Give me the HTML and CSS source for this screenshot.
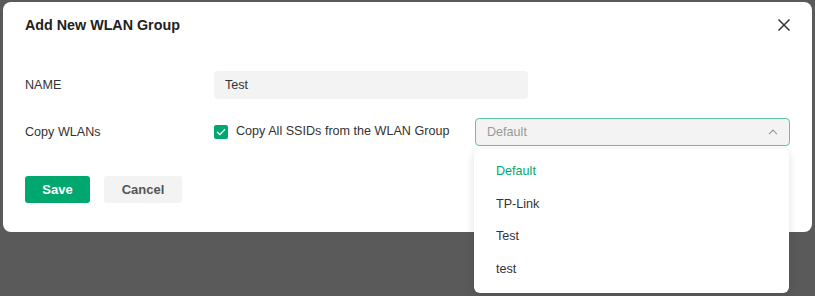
FILE: index.html
```html
<!DOCTYPE html>
<html lang="en">

<head>
    <meta charset="UTF-8">
    <meta name="viewport" content="width=device-width, initial-scale=1.0">
    <title>Add New WLAN Group</title>
    <link rel="stylesheet" href="styles.css">
</head>

<body>
    <div class="modal">
        <div class="modal-header">
            <h3>Add New WLAN Group</h3>
            <button class="close-btn" aria-label="Close">
                <svg width="14" height="14" viewBox="0 0 14 14">
                    <path d="M1.5 1.5 L12.5 12.5 M12.5 1.5 L1.5 12.5" stroke="#333" stroke-width="1.5" fill="none" />
                </svg>
            </button>
        </div>

        <div class="form-row row-name">
            <label class="form-label">NAME</label>
            <div class="input-box">Test</div>
        </div>

        <div class="form-row row-copy">
            <label class="form-label">Copy WLANs</label>
            <div class="copy-field">
                <span class="checkbox">
                    <svg width="10" height="8" viewBox="0 0 10 8">
                        <path d="M1 4 L3.8 6.6 L9 1.2" stroke="#fff" stroke-width="1.3" fill="none" />
                    </svg>
                </span>
                <span class="checkbox-text">Copy All SSIDs from the WLAN Group</span>
                <div class="select-wrap">
                    <div class="select-box">
                        <span>Default</span>
                        <svg width="10" height="6" viewBox="0 0 10 6">
                            <path d="M1 5.2 L5 1.2 L9 5.2" stroke="#999" stroke-width="1.2" fill="none" />
                        </svg>
                    </div>
                    <ul class="dropdown">
                        <li class="active">Default</li>
                        <li>TP-Link</li>
                        <li>Test</li>
                        <li>test</li>
                    </ul>
                </div>
            </div>
        </div>

        <div class="actions">
            <button class="btn btn-save">Save</button>
            <button class="btn btn-cancel">Cancel</button>
        </div>
    </div>
</body>

</html>
```

FILE: styles.css
```css
* {
    box-sizing: border-box;
    margin: 0;
    padding: 0;
}

body {
    font-family: "Liberation Sans", Arial, sans-serif;
    font-size: 12.6px;
    color: #333;
    background-color: #5a5a5a;
    height: 296px;
    overflow: hidden;
}

.modal {
    margin: 2px 0 0 3px;
    width: 809px;
    height: 230px;
    background-color: #fff;
    border-radius: 8px;
    padding: 12px 22px 0 22px;
}

.modal-header {
    display: flex;
    justify-content: space-between;
    align-items: center;
    height: 22px;
}

.modal-header h3 {
    font-size: 14.3px;
    font-weight: bold;
    color: #222;
}

.close-btn {
    border: none;
    background: none;
    display: flex;
    margin-right: -1px;
    cursor: pointer;
}

.form-row {
    display: flex;
    align-items: center;
    height: 28px;
}

.row-name {
    margin-top: 35px;
}

.row-copy {
    margin-top: 19px;
}

.form-label {
    width: 189px;
    color: #333;
}

.input-box {
    width: 314px;
    height: 28px;
    line-height: 28px;
    padding: 0 11px;
    background-color: #f3f3f3;
    border-radius: 4px;
    color: #333;
}

.copy-field {
    display: flex;
    align-items: center;
}

.checkbox {
    width: 14px;
    height: 14px;
    border-radius: 2px;
    background-color: #00a870;
    display: flex;
    align-items: center;
    justify-content: center;
    margin-top: -1px;
}

.checkbox-text {
    margin-left: 8px;
    margin-top: -3px;
    width: 239px;
}

.select-wrap {
    position: relative;
}

.select-box {
    width: 315px;
    height: 28px;
    border: 1px solid #5cc9a0;
    border-radius: 4px;
    background-color: #f3f3f3;
    display: flex;
    align-items: center;
    justify-content: space-between;
    padding: 0 11px;
    color: #999;
}

.dropdown {
    position: absolute;
    top: 31px;
    left: -1px;
    width: 315px;
    height: 144px;
    list-style: none;
    background-color: #fff;
    border-radius: 6px;
    box-shadow: 0 2px 10px rgba(0, 0, 0, 0.12);
    padding-top: 6px;
    z-index: 10;
}

.dropdown li {
    height: 32.5px;
    line-height: 32.5px;
    padding-left: 22px;
    color: #333;
}

.dropdown li.active {
    color: #00a870;
}

.actions {
    display: flex;
    gap: 14px;
    margin-top: 30px;
}

.btn {
    height: 27px;
    border: none;
    border-radius: 3px;
    font-family: "Liberation Sans", Arial, sans-serif;
    font-size: 13px;
    font-weight: bold;
    cursor: pointer;
}

.btn-save {
    width: 65px;
    background-color: #00a870;
    color: #fff;
}

.btn-cancel {
    width: 78px;
    background-color: #f3f3f3;
    color: #555;
}
```
